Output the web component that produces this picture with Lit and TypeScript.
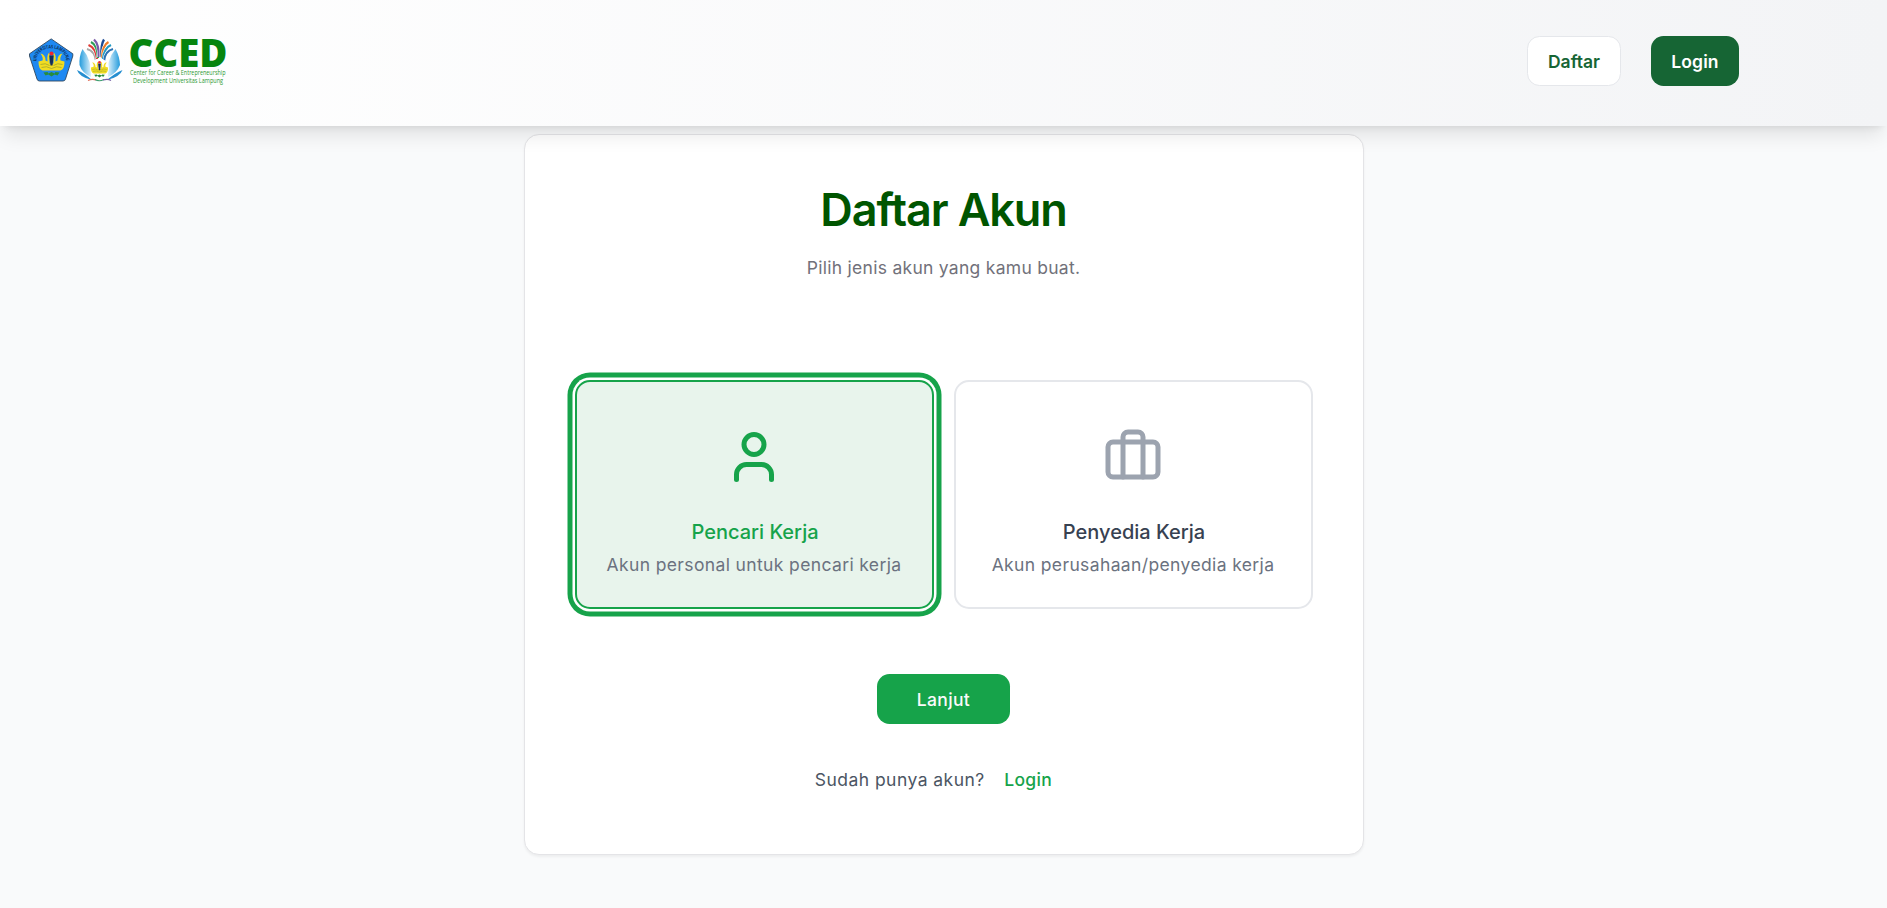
import { LitElement, html, css, svg } from "lit";
import { customElement, property, state } from "lit/decorators.js";

@customElement("cced-logo")
class CcedLogo extends LitElement {
  static styles = css`
    :host { display: block; width: 220px; height: 90px; }
    svg { display: block; overflow: visible; }
    .wordmark { font-family: "Open Sans", sans-serif; font-weight: 800; font-size: 38.5px; fill: #07850f; }
    .caption { font-family: "Open Sans", sans-serif; font-size: 6.7px; fill: #2d9a33; }
    .ring { font-family: "Open Sans", sans-serif; font-weight: 700; font-size: 4.8px; fill: #0c2f55; }
  `;
  render() {
    const feathers = [
      ["M96 61Q95 51 87 49", "#a8a8a8"],
      ["M97 59Q96 48 88.500 45", "#e03a35"],
      ["M98 58Q97.500 45 91 42", "#2f9e58"],
      ["M98.800 57Q99 44 94 39.500", "#7a5ca8"],
      ["M101.200 57Q101 44 104 39.500", "#1d4b94"],
      ["M102 58Q102.500 45 108.500 42", "#ee7d28"],
      ["M103 59Q104 48 111 45", "#249bc4"],
      ["M104 61Q105 51 113 49", "#2d73b4"],
    ];
    const crest = svg`
      <path d="M-11-8Q-6-7-6-1L-4 0Q-5-7-2-9V2H2V-9Q5-7 4 0L6-1Q6-7 11-8Q8-4 9-1L13 0Q13 8 9 9H-9Q-13 8-13 0L-9-1Q-8-4-11-8Z" fill="#f1dc21"/>
      <path d="M-11 3Q-6 1-2 4M11 3Q6 1 2 4M-10 6Q-5 4 0 7Q5 4 10 6" fill="none" stroke="#a2a52c" stroke-width=".8"/>
      <path d="M-2.200-6H2.200L1 4H-1Z" fill="#182d55"/>
      <circle cy="-8" r="2" fill="#ec2634"/>
      <path d="M-8 11L-4 10.500L-3 12L0 10.500L3 12L4 10.500L8 11L6 14L3 13L0 15L-3 13L-6 14Z" fill="#278c3d"/>`;
    return html`<svg width="220" height="90" viewBox="28 16 220 90" role="img" aria-label="CCED">
      <defs>
        <linearGradient id="left"><stop offset="0" stop-color="#239bdc"/><stop offset="1" stop-color="#dff2fc"/></linearGradient>
        <linearGradient id="right"><stop offset="0" stop-color="#dff2fc"/><stop offset="1" stop-color="#239bdc"/></linearGradient>
      </defs>
      <path d="M51.200 38.900 72.800 53.800V56L65.500 79Q65 81 63 81H39.500Q37.500 81 37 79L29.500 56V53.800Z" fill="#1f89f2" stroke="#31475d" stroke-width=".9"/>
      <path id="arc" d="M36.500 61.500C35 44 67.500 44 66 61.500" fill="none"/>
      <text class="ring"><textPath href="#arc" textLength="44" lengthAdjust="spacingAndGlyphs">UNIVERSITAS LAMPUNG</textPath></text>
      <g transform="translate(51.500 61.500)">${crest}</g>
      <path d="M82.500 49Q79 56 79.500 65Q82 73 91 77Q92 60 82.500 49Z" fill="url(#left)"/>
      <path d="M115.500 49Q119.500 56 120 65Q117 73 108 77Q106 60 115.500 49Z" fill="url(#right)"/>
      <path d="M77 70Q84 73 92 80Q79 77 77 70Z" fill="#258ed0"/>
      <path d="M122.500 70Q115 73 107 80Q120 77 122.500 70Z" fill="#258ed0"/>
      ${feathers.map(([d, c]) => svg`<path d=${d} fill="none" stroke="#fff" stroke-width="3.200"/><path d=${d} fill="none" stroke=${c} stroke-width="2.300"/>`)}
      <circle cx="99.500" cy="68" r="9.500" fill="#fff"/>
      <g transform="translate(99.500 67.500) scale(.66)">${crest}</g>
      <path d="M88 80.500Q92 78.500 96 80" fill="none" stroke="#e06b55" stroke-width="1.200"/>
      <path d="M95 79.500Q99 82 104 79.500" fill="none" stroke="#3d9d70" stroke-width="1.200"/>
      <path d="M103 80Q108 78.500 111 80.500" fill="none" stroke="#7560a4" stroke-width="1.200"/>
      <text class="wordmark" x="128.500" y="66.500" textLength="99" lengthAdjust="spacingAndGlyphs">CCED</text>
      <text class="caption" x="130" y="75" textLength="95.500" lengthAdjust="spacingAndGlyphs">Center for Career &amp; Entrepreneurship</text>
      <text class="caption" x="133" y="83" textLength="90" lengthAdjust="spacingAndGlyphs">Development Universitas Lampung</text>
    </svg>`;
  }
}

@customElement("account-option")
class AccountOption extends LitElement {
  @property() heading = "";
  @property() detail = "";
  @property() icon = "person";
  @property({ type: Boolean, reflect: true }) selected = false;
  static styles = css`
    :host {
      box-sizing: border-box; display: flex; flex-direction: column; align-items: center;
      height: 229px; padding-top: 45px; border: 2px solid #e5e7eb; border-radius: 15px;
      background: #fff; cursor: pointer; color: #374151;
    }
    :host([selected]) {
      border-color: #16a34a; background: #e8f4ec;
      box-shadow: 0 0 0 2.5px #fff, 0 0 0 7.5px #16a34a;
    }
    .icon { display: block; width: 60px; height: 60px; fill: none; stroke: #9ca3af; stroke-width: 2; stroke-linecap: round; stroke-linejoin: round; }
    .heading { margin-top: 30px; padding-left: 2px; font-size: 20px; line-height: 30px; font-weight: 500; }
    .detail { margin-top: 5px; font-size: 17.5px; line-height: 25px; letter-spacing: .37px; color: #6b7280; }
    :host([selected]) .icon { stroke: #16a34a; }
    :host([selected]) .heading { color: #16a34a; }
  `;
  render() {
    return html`
      <svg class="icon" viewBox="0 0 24 24">
        ${this.icon === "person"
          ? svg`<path d="M19 21v-2a4 4 0 0 0-4-4H9a4 4 0 0 0-4 4v2"/><circle cx="12" cy="7" r="4"/>`
          : svg`<path d="M16 20V4a2 2 0 0 0-2-2h-4a2 2 0 0 0-2 2v16"/><rect width="20" height="14" x="2" y="6" rx="2"/>`}
      </svg>
      <div class="heading">${this.heading}</div>
      <div class="detail">${this.detail}</div>`;
  }
}

@customElement("app-root")
class AppRoot extends LitElement {
  @state() private kind = "seeker";
  static styles = css`
    :host {
      display: flex; flex-direction: column; height: 908px; overflow: hidden;
      background: #f9fafb; font-family: Inter, sans-serif; font-size: 17.5px; line-height: 25px;
    }
    .header {
      box-sizing: border-box; position: relative; z-index: 1; flex: none; height: 126px;
      display: flex; justify-content: space-between; align-items: center;
      padding: 0 148px 4px 28px;
      background: linear-gradient(to right, #fff, #f3f4f6);
      box-shadow: 0 12.5px 18.75px -3.75px rgb(0 0 0 / .1), 0 5px 7.5px -5px rgb(0 0 0 / .1);
    }
    .actions { display: flex; gap: 30px; }
    .btn {
      box-sizing: border-box; height: 50px; border: 0; border-radius: 12.5px; padding: 0;
      display: flex; align-items: center; justify-content: center;
      font: 500 17.5px/25px Inter, sans-serif; cursor: pointer;
    }
    .register { width: 94px; background: #fff; border: 1px solid #e5e7eb; color: #166534; font-weight: 600; }
    .login { width: 88px; background: #166534; color: #fff; font-weight: 600; letter-spacing: .1px; }
    .card {
      box-sizing: border-box; width: 840px; height: 721px; margin: 8px auto 0; flex: none;
      padding: 50px 50px 0; border: 1px solid #e4e4e7; border-radius: 15px; background: #fff;
      box-shadow: 0 1.25px 2.5px rgb(0 0 0 / .05);
      display: flex; flex-direction: column; align-items: center;
    }
    .title { margin: 0; font-size: 45px; line-height: 50px; font-weight: 600; letter-spacing: -0.025em; color: #005500; }
    .subtitle { margin: 20px 0 0; letter-spacing: .28px; color: #71717a; }
    .options { display: grid; grid-template-columns: 1fr 1fr; gap: 20px; width: 100%; margin-top: 100px; }
    .next { width: 133px; margin-top: 65px; background: #16a34a; color: #fafafa; letter-spacing: .35px; }
    .footer { display: flex; gap: 19.5px; margin: 43px 20px 0 0; color: #4b5563; letter-spacing: .46px; }
    .link { color: #16a34a; font-weight: 500; text-decoration: none; letter-spacing: .35px; }
  `;
  render() {
    return html`
      <header class="header">
        <cced-logo></cced-logo>
        <nav class="actions">
          <button class="btn register">Daftar</button>
          <button class="btn login">Login</button>
        </nav>
      </header>
      <main class="card">
        <h1 class="title">Daftar Akun</h1>
        <p class="subtitle">Pilih jenis akun yang kamu buat.</p>
        <div class="options">
          <account-option heading="Pencari Kerja" detail="Akun personal untuk pencari kerja" icon="person"
            ?selected=${this.kind === "seeker"} @click=${() => (this.kind = "seeker")}></account-option>
          <account-option heading="Penyedia Kerja" detail="Akun perusahaan/penyedia kerja" icon="luggage"
            ?selected=${this.kind === "provider"} @click=${() => (this.kind = "provider")}></account-option>
        </div>
        <button class="btn next">Lanjut</button>
        <div class="footer"><span>Sudah punya akun?</span><a class="link" href="#">Login</a></div>
      </main>`;
  }
}
